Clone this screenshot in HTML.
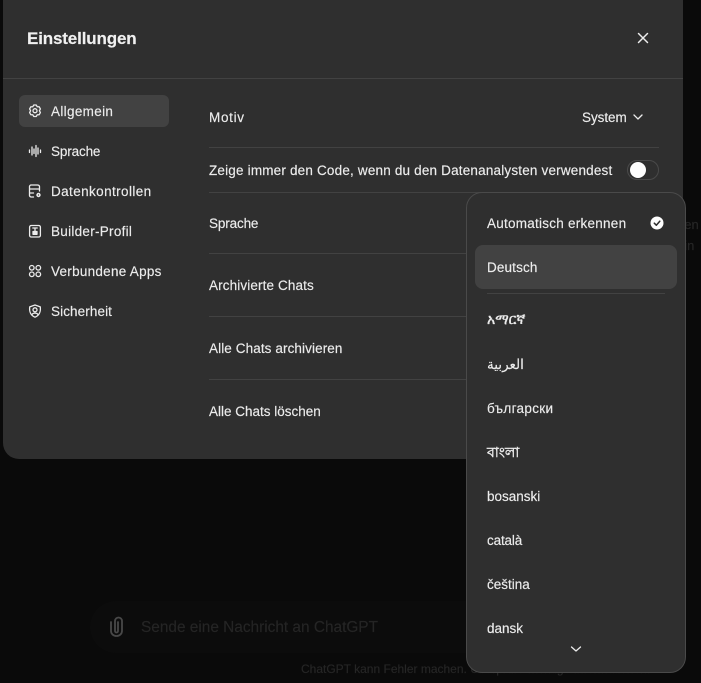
<!DOCTYPE html>
<html><head><meta charset="utf-8"><style>
html,body{margin:0;padding:0;width:701px;height:683px;overflow:hidden;background:#0a0a0a}
body{position:relative;font-family:"Liberation Sans","Noto Sans CJK SC","DejaVu Sans",sans-serif;font-size:13.5px;color:#ececec;-webkit-text-stroke:.15px currentColor}
.t{position:absolute;white-space:nowrap;line-height:18px}
.l{position:absolute;height:1px;background:#424242}
svg{position:absolute;fill:none;stroke:#ececec;stroke-width:1.3;stroke-linecap:round;stroke-linejoin:round}
#m{position:absolute;left:3px;top:-20px;width:680px;height:479px;background:#2f2f2f;border-radius:16px}
#d{position:absolute;left:466px;top:192px;width:220px;height:481px;background:#2f2f2f;border:1px solid #4a4a4a;border-radius:16px;box-sizing:border-box}
</style></head><body>
<div style="position:absolute;left:90px;top:601px;width:420px;height:52px;background:#0c0c0c;border-radius:26px"></div>
<div class="t" style="left:141px;top:619px;font-size:15.4px;color:#252525">Sende eine Nachricht an ChatGPT</div>
<div class="t" style="left:301px;top:660px;font-size:12px;color:#262626">ChatGPT kann Fehler machen. Überprüfe wichtige Informationen.</div>
<svg style="left:109px;top:616px;stroke:#484848;stroke-width:1.800" width="15" height="21" viewBox="0 0 15 21"><path d="M2 6v9a5.500 5 0 0 0 11 0V5a3.500 3.500 0 0 0-7 0v10a1.500 1.500 0 0 0 3 0V6"/></svg>
<div class="t" style="left:677px;top:216px;font-size:13px;color:#262626">een</div>
<div class="t" style="left:677px;top:237px;font-size:13px;color:#262626">ein</div>
<div id="m"></div>
<div class="t" style="left:27px;top:28px;font-size:17px;font-weight:bold;line-height:22px;color:#f0f0f0;letter-spacing:-.15px">Einstellungen</div>
<svg style="left:636px;top:31px;stroke-width:1.500" width="14" height="14" viewBox="0 0 14 14"><path d="M2.500 2.500l9 9M11.500 2.500l-9 9"/></svg>
<div class="l" style="left:3px;top:78px;width:680px"></div>
<div style="position:absolute;left:19px;top:95px;width:150px;height:32px;background:#424242;border-radius:6px"></div>
<svg style="left:27px;top:103px" width="16" height="16" viewBox="0 0 16 16"><path d="M6.800 2h2.400l1 1.700 2 .1 1.200 2.100-1 1.800 1 1.900-1.200 2.100-2 .1-1 1.700H6.800l-1-1.700-2-.1-1.200-2.100 1-1.900-1-1.800 1.200-2.100 2-.1z"/><circle cx="8" cy="7.700" r="2"/></svg>
<div class="t" style="left:51px;top:103px;letter-spacing:.33px">Allgemein</div>
<svg style="left:27px;top:143px" width="16" height="16" viewBox="0 0 16 16"><path d="M2.500 7v2.500M5 4v8M7 6v4.500M9 2.500v11M11 5v6M13.500 7v2.500"/></svg>
<div class="t" style="left:51px;top:143px;letter-spacing:-.14px">Sprache</div>
<svg style="left:27px;top:183px" width="16" height="16" viewBox="0 0 16 16"><path d="M6.500 14H4A1.800 1.800 0 0 1 2.500 12.500v-9C2.500 2.700 3.300 2 4 2h6.500C11.500 2 12.500 2.700 12.500 3.500V8M2.500 6h10M2.500 10h4"/><circle cx="11.500" cy="12" r="2.200" fill="#ececec" stroke="none"/><circle cx="11.500" cy="12" r=".6" fill="#2f2f2f" stroke="none"/></svg>
<div class="t" style="left:51px;top:183px;letter-spacing:.4px">Datenkontrollen</div>
<svg style="left:27px;top:223px" width="16" height="16" viewBox="0 0 16 16"><rect x="2.600" y="2.500" width="10.800" height="11.500" rx="1.600"/><path d="M5.800 5h4.400M8 5v3"/><rect x="6" y="8.500" width="4" height="2.800" fill="#ececec"/></svg>
<div class="t" style="left:51px;top:223px;letter-spacing:.28px">Builder-Profil</div>
<svg style="left:27px;top:263px" width="16" height="16" viewBox="0 0 16 16"><circle cx="4.800" cy="4.800" r="2.300"/><circle cx="11.300" cy="4.800" r="2.300"/><circle cx="4.800" cy="11.300" r="2.300"/><circle cx="11.300" cy="11.300" r="2.300"/></svg>
<div class="t" style="left:51px;top:263px;letter-spacing:.27px">Verbundene Apps</div>
<svg style="left:27px;top:303px" width="16" height="16" viewBox="0 0 16 16"><path d="M8 2l5.300 1.900c.5 4.700-.5 8.200-5.300 10.300-4.800-2.100-5.800-5.600-5.300-10.300z"/><circle cx="8" cy="6.800" r="2"/><path d="M5 11.500c1-1.800 5-1.800 6 0"/></svg>
<div class="t" style="left:51px;top:303px;letter-spacing:.1px">Sicherheit</div>

<div class="t" style="left:209px;top:109px;letter-spacing:.7px">Motiv</div>
<div class="t" style="left:582px;top:109px;letter-spacing:-.05px">System</div>
<svg style="left:632px;top:112px" width="12" height="10" viewBox="0 0 12 10"><path d="M2 3l4 4 4-4"/></svg>
<div class="l" style="left:209px;top:147px;width:450px"></div>
<div class="t" style="left:209px;top:162px;letter-spacing:.185px">Zeige immer den Code, wenn du den Datenanalysten verwendest</div>
<div style="position:absolute;left:627px;top:160px;width:32px;height:20px;box-sizing:border-box;border:1px solid #4a4a4a;border-radius:10px"></div>
<div style="position:absolute;left:630px;top:162px;width:16px;height:16px;background:#fff;border-radius:50%"></div>
<div class="l" style="left:209px;top:192px;width:450px"></div>
<div class="t" style="left:209px;top:215px;letter-spacing:-.14px">Sprache</div>
<div class="l" style="left:209px;top:253px;width:258px"></div>
<div class="t" style="left:209px;top:277px;letter-spacing:.12px">Archivierte Chats</div>
<div class="l" style="left:209px;top:316px;width:258px"></div>
<div class="t" style="left:209px;top:340px;letter-spacing:.1px">Alle Chats archivieren</div>
<div class="l" style="left:209px;top:379px;width:258px"></div>
<div class="t" style="left:209px;top:403px">Alle Chats löschen</div>

<div id="d"></div>
<div class="t" style="left:487px;top:215px;letter-spacing:.25px">Automatisch erkennen</div>
<svg style="left:650px;top:216px;stroke:none" width="14" height="14" viewBox="0 0 14 14"><circle cx="7" cy="7" r="6.500" fill="#fff" stroke="none"/><path d="M4.300 7.200l2 2 3.500-4" stroke="#2f2f2f" stroke-width="1.500"/></svg>
<div style="position:absolute;left:475px;top:245px;width:202px;height:44px;background:#424242;border-radius:8px"></div>
<div class="t" style="left:487px;top:259px;letter-spacing:.14px">Deutsch</div>
<div class="l" style="left:487px;top:293px;width:178px"></div>
<div class="t" style="left:487px;top:310px;font-size:14px;-webkit-text-stroke:.4px #ececec">አማርኛ</div>
<div class="t" style="left:487px;top:356px" dir="ltr">العربية</div>
<div class="t" style="left:487px;top:400px;letter-spacing:.33px">български</div>
<div class="t" style="left:487px;top:443px;font-size:14px;-webkit-text-stroke:.4px #ececec">বাংলা</div>
<div class="t" style="left:487px;top:488px">bosanski</div>
<div class="t" style="left:487px;top:532px;letter-spacing:-.15px">català</div>
<div class="t" style="left:487px;top:576px">čeština</div>
<div class="t" style="left:487px;top:620px">dansk</div>
<svg style="left:570px;top:644px" width="12" height="10" viewBox="0 0 12 10"><path d="M1.500 3l4.500 4 4.500-4"/></svg>
</body></html>
